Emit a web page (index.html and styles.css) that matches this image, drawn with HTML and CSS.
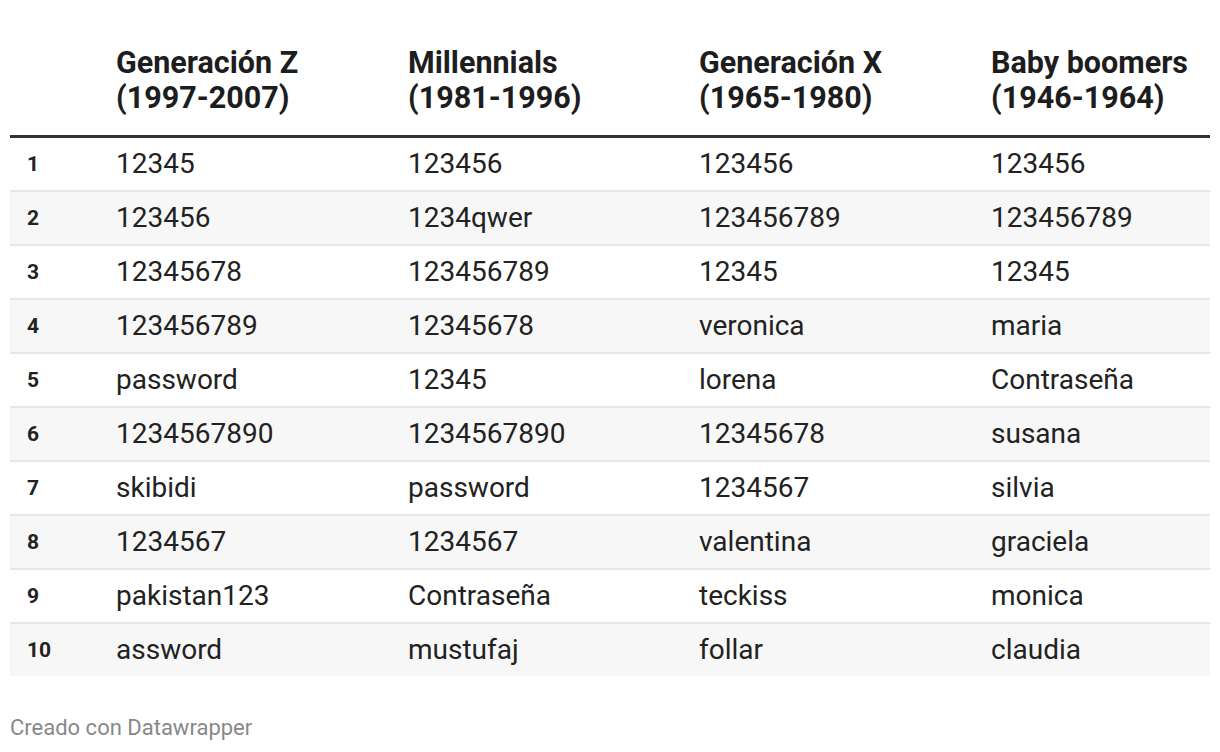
FILE: index.html
```html
<!DOCTYPE html>
<html lang="es">
<head>
<meta charset="utf-8">
<title>Contraseñas por generación</title>
<link rel="stylesheet" href="styles.css">
</head>
<body>
<div class="page">
  <table class="pw-table">
    <colgroup>
      <col class="c-idx">
      <col class="c-a">
      <col class="c-b">
      <col class="c-c">
      <col class="c-d">
    </colgroup>
    <thead>
      <tr>
        <th></th>
        <th>Generación Z<br>(1997-2007)</th>
        <th>Millennials<br>(1981-1996)</th>
        <th>Generación X<br>(1965-1980)</th>
        <th>Baby boomers<br>(1946-1964)</th>
      </tr>
    </thead>
    <tbody>
      <tr><td class="idx">1</td><td>12345</td><td>123456</td><td>123456</td><td>123456</td></tr>
      <tr><td class="idx">2</td><td>123456</td><td>1234qwer</td><td>123456789</td><td>123456789</td></tr>
      <tr><td class="idx">3</td><td>12345678</td><td>123456789</td><td>12345</td><td>12345</td></tr>
      <tr><td class="idx">4</td><td>123456789</td><td>12345678</td><td>veronica</td><td>maria</td></tr>
      <tr><td class="idx">5</td><td>password</td><td>12345</td><td>lorena</td><td>Contraseña</td></tr>
      <tr><td class="idx">6</td><td>1234567890</td><td>1234567890</td><td>12345678</td><td>susana</td></tr>
      <tr><td class="idx">7</td><td>skibidi</td><td>password</td><td>1234567</td><td>silvia</td></tr>
      <tr><td class="idx">8</td><td>1234567</td><td>1234567</td><td>valentina</td><td>graciela</td></tr>
      <tr><td class="idx">9</td><td>pakistan123</td><td>Contraseña</td><td>teckiss</td><td>monica</td></tr>
      <tr><td class="idx">10</td><td>assword</td><td>mustufaj</td><td>follar</td><td>claudia</td></tr>
    </tbody>
  </table>
  <p class="credit">Creado con Datawrapper</p>
</div>
</body>
</html>
```
FILE: styles.css
```css
html, body {
  margin: 0;
  padding: 0;
  background: #ffffff;
}

.page {
  padding: 45px 10px 0;
  font-family: Roboto, "Liberation Sans", Arial, sans-serif;
  color: #222222;
}

.pw-table {
  width: 1200px;
  table-layout: fixed;
  border-collapse: separate;
  border-spacing: 0;
}

.c-idx { width: 106px; }
.c-a { width: 292px; }
.c-b { width: 291px; }
.c-c { width: 292px; }
.c-d { width: 219px; }

.pw-table th {
  text-align: left;
  vertical-align: bottom;
  font-size: 30.5px;
  font-weight: 700;
  line-height: 35px;
  color: #1d1d1d;
  padding: 0 0 20px 0;
  border-bottom: 3px solid #333333;
}

.pw-table td {
  padding: 0;
  font-size: 28px;
  font-weight: 400;
  line-height: 52px;
  color: #222222;
  white-space: nowrap;
  border-bottom: 2px solid #e6e6e6;
}

.pw-table tbody tr:nth-child(even) td {
  background: #f7f7f7;
}

.pw-table tbody tr:last-child td {
  border-bottom: none;
}

.pw-table td.idx {
  font-size: 21px;
  font-weight: 700;
  padding-left: 17px;
  color: #222222;
}

.credit {
  margin: 39px 0 0;
  font-size: 22px;
  line-height: 26px;
  color: #888888;
}
```
